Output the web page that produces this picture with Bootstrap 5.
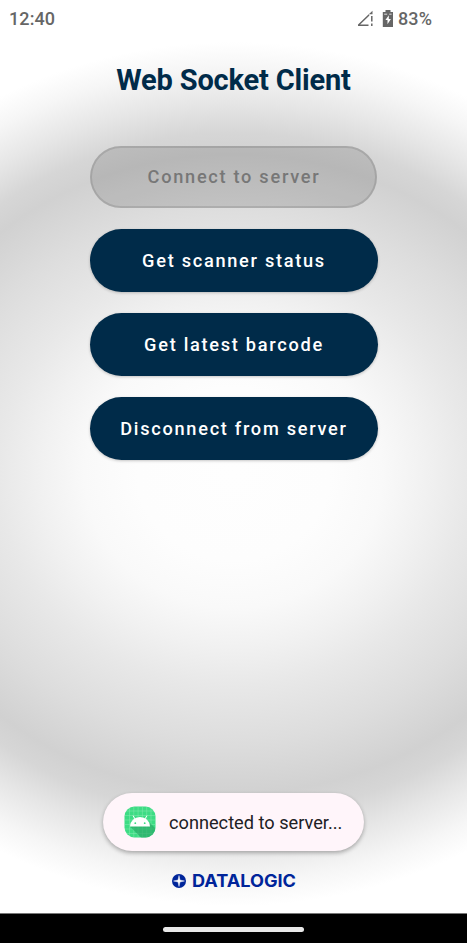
<!DOCTYPE html>
<html lang="en">
<head>
<meta charset="utf-8">
<meta name="viewport" content="width=device-width, initial-scale=1">
<title>Web Socket Client</title>
<link href="https://cdn.jsdelivr.net/npm/bootstrap@5.3.0/dist/css/bootstrap.min.css" rel="stylesheet">
<style>
body{font-family:Roboto,sans-serif;background:#fff;overflow:hidden}
.screen{height:943px;background:radial-gradient(ellipse 480px 432px at 233.5px 474px,#fefefe 0,#fdfdfd 20%,#f9f9f9 31%,#f1f1f1 40%,#e8e8e8 49%,#dddddd 62%,#d1d1d1 74%,#d6d6d6 79%,#e6e6e6 86%,#f6f6f6 94%,#fff 100%)}
.status{height:37px;padding:0 35px 0 9px;color:#666;font-size:18px;font-weight:500;letter-spacing:.1px}
.title{margin-top:24px;font-size:29px;line-height:38px;font-weight:700;letter-spacing:-.18px;color:#002b49}
.actions{margin-top:46.6px;gap:21px}
.btn-pill{width:288px;height:63px;font-size:18.2px;font-weight:500;letter-spacing:1.71px;border:0;padding:1px 0 0 1px;--bs-btn-color:#fff;--bs-btn-bg:#002b49;--bs-btn-hover-bg:#003a61;--bs-btn-hover-color:#fff;box-shadow:0 1px 3px rgba(0,0,0,.22)}
.btn-pill:disabled{width:287px;height:62px;background:rgba(0,0,0,.12);color:#777;opacity:1;border:2px solid rgba(0,0,0,.11);box-shadow:none;padding:0 0 0 1px}
.notice{width:261px;height:58px;padding:0 21px;gap:13px;background:#fff5fa;color:#202024;font-size:18.2px;box-shadow:0 2px 4px rgba(0,0,0,.3)}
.notice span{padding-top:2px}
.brandmark{margin-top:17px;margin-bottom:19px}
.navpill-area{height:30px;background:#000;border-top:1px solid #777;padding-top:2px}
.navpill{width:141px;height:5px;background:#e8e8e8}
</style>
</head>
<body>
<div class="screen d-flex flex-column align-items-center">
  <header class="status d-flex align-items-center w-100">
    <span>12:40</span>
    <svg class="ms-auto" width="18" height="17" viewBox="0 0 18 17" aria-label="No signal"><path d="M2.300 15.300 13 5M2 15.300h10.500" fill="none" stroke="#666" stroke-width="1.500"/><path d="M11.500 5.500 16.500.800V4.200h-3z" fill="#666"/><path d="M15.800 6v5.500M15.800 13.500v2.500" stroke="#666" stroke-width="1.500"/></svg>
    <svg class="ms-2" width="12" height="17" viewBox="0 0 12 17" aria-label="Charging"><path d="M3.500 0h5v2H11v15H.8V2h2.700z" fill="#666"/><path d="M6.800 5.200 3.400 10h2.100v4.300L8.900 9H6.800z" fill="#fff"/><path d="M2.200 4.200h3M7.200 4.200h2.400" stroke="#ddd" stroke-width="1"/></svg>
    <span class="ms-1">83%</span>
  </header>
  <h1 class="title mb-0">Web Socket Client</h1>
  <main class="actions d-flex flex-column align-items-center">
    <button class="btn btn-pill rounded-pill" disabled>Connect to server</button>
    <button class="btn btn-pill rounded-pill">Get scanner status</button>
    <button class="btn btn-pill rounded-pill">Get latest barcode</button>
    <button class="btn btn-pill rounded-pill">Disconnect from server</button>
  </main>
  <div class="notice d-flex align-items-center rounded-pill mt-auto" role="status">
    <svg width="32" height="32" viewBox="0 0 32 32" aria-hidden="true">
      <defs><clipPath id="tile"><rect x=".5" y=".5" width="31" height="31" rx="10"/></clipPath></defs>
      <g clip-path="url(#tile)">
        <path fill="#3ddc84" d="M0 0h32v32H0z"/>
        <path d="M5.500 0v32M9.800 0v32M14.100 0v32M18.400 0v32M22.700 0v32M27 0v32M0 5h32M0 9.500h32M0 14h32M0 18.500h32M0 23h32M0 27.500h32" stroke="#8cebb6" stroke-width=".45"/>
        <path d="m6 20.500 11.500 11.500H32V23l-6-6z" fill="#27a664" opacity=".65"/>
        <path d="M6 20.500a10 9.500 0 0 1 20 0z" fill="#fff"/>
        <path d="m11 13-1.700-3M21 13l1.700-3" stroke="#fff" stroke-width="1" stroke-linecap="round"/>
        <circle cx="11.300" cy="17.200" r=".9" fill="#3ddc84"/><circle cx="20.700" cy="17.200" r=".9" fill="#3ddc84"/>
      </g>
    </svg>
    <span class="text-nowrap">connected to server...</span>
  </div>
  <svg class="brandmark flex-shrink-0" width="126" height="26" viewBox="0 -4 126 26" aria-label="Datalogic">
    <circle cx="8" cy="9" r="7" fill="#00259a"/>
    <path d="M8 3.500 9 8l4.500 1L9 10l-1 4.500L7 10 2.500 9 7 8z" fill="#fff" stroke="#fff" stroke-width=".4"/>
    <text x="21" y="15.300" textLength="104" lengthAdjust="spacingAndGlyphs" font-family="Inter, sans-serif" font-weight="700" font-size="17.200" fill="#00259a">DATALOGIC</text>
  </svg>
  <footer class="navpill-area w-100 d-flex align-items-center justify-content-center flex-shrink-0"><div class="navpill rounded-pill"></div></footer>
</div>
<script src="https://cdn.jsdelivr.net/npm/bootstrap@5.3.0/dist/js/bootstrap.bundle.min.js"></script>
</body>
</html>
